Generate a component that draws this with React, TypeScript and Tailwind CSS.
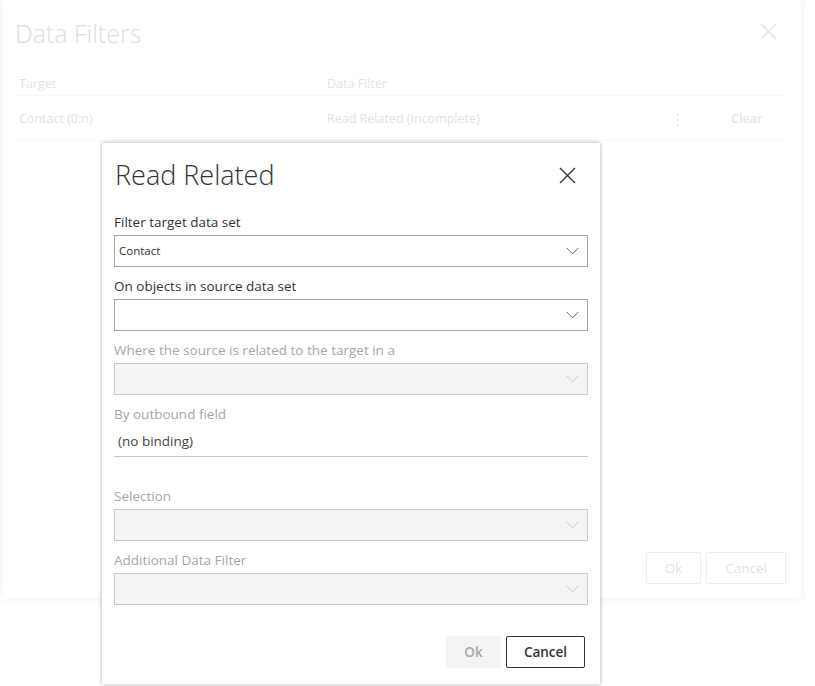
import React from 'react';

const font = { fontFamily: '"Segoe UI", "Open Sans", sans-serif' };

const Chevron = ({ disabled }: { disabled?: boolean }) => (
  <svg width="13" height="8" viewBox="0 0 13 8" fill="none">
    <path
      d="M0.5 0.8 L6.5 6.8 L12.5 0.8"
      stroke={disabled ? '#c8c8c8' : '#666666'}
      strokeWidth="1"
    />
  </svg>
);

const CloseIcon = ({ color }: { color: string }) => (
  <svg width="17" height="17" viewBox="0 0 17 17" fill="none">
    <path d="M1 1 L16 16 M16 1 L1 16" stroke={color} strokeWidth="1.4" />
  </svg>
);

interface SelectProps {
  label: string;
  value?: string;
  disabled?: boolean;
}

const SelectField: React.FC<SelectProps> = ({ label, value, disabled }) => (
  <div className="flex flex-col mb-[9px]">
    <label className={`text-[13.5px] leading-[20px] mb-[3px] ${disabled ? 'text-[#a6a6a6]' : 'text-[#333333]'}`}>
      {label}
    </label>
    <div
      className={`h-[32px] flex items-center justify-between pl-[4px] pr-[8px] border ${
        disabled ? 'bg-[#f4f4f4] border-[#c8c8c8]' : 'bg-white border-[#a6a6a6]'
      }`}
    >
      <span className="text-[11.5px] text-[#333333]">{value}</span>
      <Chevron disabled={disabled} />
    </div>
  </div>
);

const App: React.FC = () => {
  return (
    <div className="relative w-[815px] h-[686px] bg-white overflow-hidden" style={font}>
      {/* Background dialog (faded) */}
      <div className="ml-[3px] w-[798px] h-[598px] bg-white shadow-[0_0_10px_rgba(0,0,0,0.08)] flex flex-col pl-[12px] pr-[16px]">
        <div className="flex items-center justify-between h-[36px] mt-[15px]">
          <h1 className="text-[25px] font-light text-[#dedede] leading-[36px]">Data Filters</h1>
          <div className="mr-[8px] mt-[-4px]">
            <CloseIcon color="#e2e2e2" />
          </div>
        </div>

        <div className="mt-[24px] ml-[2px]">
          <div className="flex h-[21px] items-start border-b border-[#f6f6f6] text-[12.5px] text-[#e2e2e2]">
            <div className="w-[310px] pl-[2px]">Target</div>
            <div>Data Filter</div>
          </div>
          <div className="flex h-[45px] pt-[3px] items-center border-b border-[#f6f6f6] text-[12.5px] text-[#e2e2e2]">
            <div className="w-[310px] pl-[2px]">Contact (0:n)</div>
            <div className="flex-1">Read Related (Incomplete)</div>
            <div className="w-[4px] flex flex-col gap-[3px] mr-[50px]">
              <span className="w-[2px] h-[2px] bg-[#e6e6e6]" />
              <span className="w-[2px] h-[2px] bg-[#e6e6e6]" />
              <span className="w-[2px] h-[2px] bg-[#e6e6e6]" />
            </div>
            <div className="w-[32px] mr-[22px] font-semibold text-[#e6e6e6]">Clear</div>
          </div>
        </div>

        <div className="mt-auto mb-[14px] mr-[-1px] flex justify-end gap-[5px]">
          <button className="w-[55px] h-[32px] border border-[#ececec] rounded-[2px] text-[13.5px] text-[#e2e2e2]">
            Ok
          </button>
          <button className="w-[80px] h-[32px] border border-[#ececec] rounded-[2px] text-[13.5px] text-[#e2e2e2]">
            Cancel
          </button>
        </div>
      </div>

      {/* Read Related dialog */}
      <div className="absolute left-[102px] top-[143px] w-[498px] h-[541px] bg-white shadow-[0_0_4px_rgba(0,0,0,0.35)] flex flex-col px-[12px]">
        <div className="flex items-center justify-between mt-[14px] h-[36px]">
          <h2 className="text-[27px] font-light text-[#333333] leading-[36px] ml-[1px]">Read Related</h2>
          <div className="mr-[12px]">
            <CloseIcon color="#333333" />
          </div>
        </div>

        <div className="mt-[19px]">
          <SelectField label="Filter target data set" value="Contact" />
          <SelectField label="On objects in source data set" />
          <SelectField label="Where the source is related to the target in a" disabled />

          <div className="flex flex-col">
            <label className="text-[13.5px] leading-[20px] text-[#a6a6a6] mb-[3px]">By outbound field</label>
            <div className="h-[30px] flex items-center border-b border-[#c8c8c8] pl-[4px] text-[13.5px] text-[#444444]">
              (no binding)
            </div>
          </div>

          <div className="mt-[29px]">
            <SelectField label="Selection" disabled />
            <SelectField label="Additional Data Filter" disabled />
          </div>
        </div>

        <div className="mt-auto mb-[16px] flex justify-end gap-[5px] pr-[3px]">
          <button className="w-[55px] h-[32px] bg-[#f4f4f4] rounded-[2px] text-[13.5px] font-semibold text-[#a6a6a6]">
            Ok
          </button>
          <button className="w-[79px] h-[32px] border border-[#333333] rounded-[2px] text-[13.5px] font-semibold text-[#333333]">
            Cancel
          </button>
        </div>
      </div>
    </div>
  );
};

export default App;
